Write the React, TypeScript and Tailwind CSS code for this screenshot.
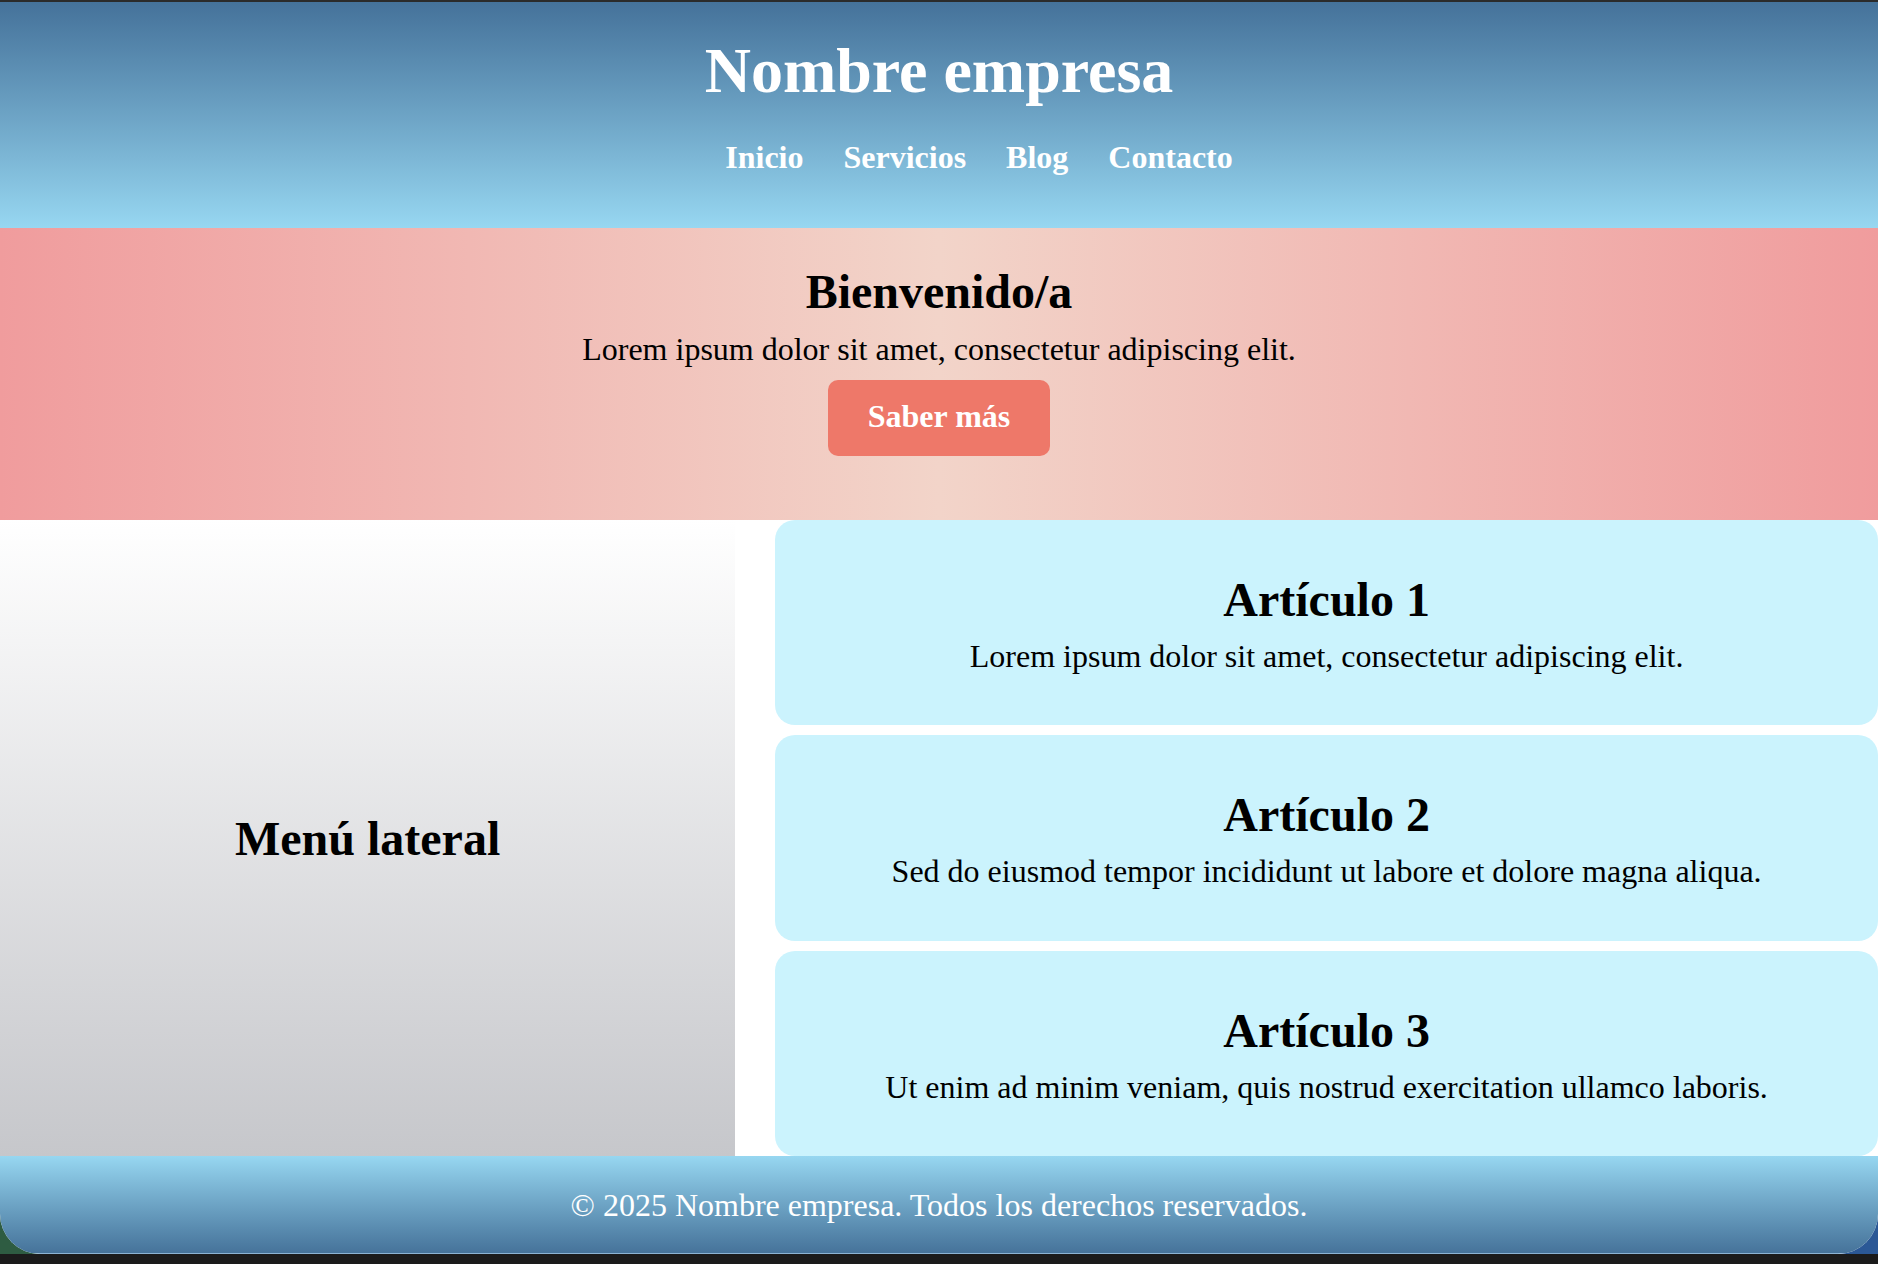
import React from 'react';

const articles = [
  { title: 'Artículo 1', text: 'Lorem ipsum dolor sit amet, consectetur adipiscing elit.' },
  { title: 'Artículo 2', text: 'Sed do eiusmod tempor incididunt ut labore et dolore magna aliqua.' },
  { title: 'Artículo 3', text: 'Ut enim ad minim veniam, quis nostrud exercitation ullamco laboris.' },
];

const navLinks = ['Inicio', 'Servicios', 'Blog', 'Contacto'];

const App: React.FC = () => {
  return (
    <div className="h-[1264px] w-full bg-[#1b1b1b] font-['Liberation_Serif','Times_New_Roman',serif] overflow-hidden">
      {/* Desktop behind the window corners */}
      <div className="h-[1254px] bg-[linear-gradient(to_right,#2e5c42_0,#2e5c42_60px,#222_60px,#222_calc(100%-60px),#2b5896_calc(100%-60px))]">
        <div className="h-full flex flex-col bg-white border-t-2 border-[#2b2b2b] rounded-b-[40px] overflow-hidden">
          {/* Header */}
          <header className="bg-gradient-to-b from-[#45729a] to-[#97d7f1] pt-[32px] pb-[52px] text-center text-white">
            <h1 className="text-[64px] leading-[74px] font-bold">Nombre empresa</h1>
            <nav className="mt-[31px] pl-[80px]">
              <ul className="flex justify-center gap-[40px]">
                {navLinks.map((link) => (
                  <li key={link} className="text-[32px] leading-[37px] font-bold">
                    {link}
                  </li>
                ))}
              </ul>
            </nav>
          </header>

          {/* Hero */}
          <section className="bg-[linear-gradient(to_right,#f09c9d,#f2d4c9,#f09c9d)] pt-[36px] pb-[64px] flex flex-col items-center text-black">
            <h2 className="text-[48px] leading-[55px] font-bold">Bienvenido/a</h2>
            <p className="mt-[12px] text-[32px] leading-[37px]">Lorem ipsum dolor sit amet, consectetur adipiscing elit.</p>
            <button className="mt-[12px] bg-[#ee7869] text-white text-[32px] leading-[37px] font-bold px-[40px] pt-[18px] pb-[21px] rounded-[10px]">
              Saber más
            </button>
          </section>

          {/* Main */}
          <main className="h-[636px] grid grid-cols-[2fr_3fr] gap-x-[40px] bg-white">
            <aside className="bg-gradient-to-b from-[#ffffff] to-[#c6c7cb] flex items-center justify-center">
              <h2 className="text-[48px] leading-[55px] font-bold text-black">Menú lateral</h2>
            </aside>
            <div className="grid grid-rows-3 gap-[10px]">
              {articles.map((a) => (
                <article key={a.title} className="bg-[#cbf3fd] rounded-[20px] pt-[52px] text-center text-black">
                  <h2 className="text-[48px] leading-[55px] font-bold">{a.title}</h2>
                  <p className="mt-[11px] text-[32px] leading-[37px]">{a.text}</p>
                </article>
              ))}
            </div>
          </main>

          {/* Footer */}
          <footer className="flex-1 bg-gradient-to-b from-[#97d7f1] to-[#46739a] pt-[31px] text-center text-white border-b border-[#8cb4d4]">
            <p className="text-[32px] leading-[37px]">© 2025 Nombre empresa. Todos los derechos reservados.</p>
          </footer>
        </div>
      </div>
    </div>
  );
};

export default App;
